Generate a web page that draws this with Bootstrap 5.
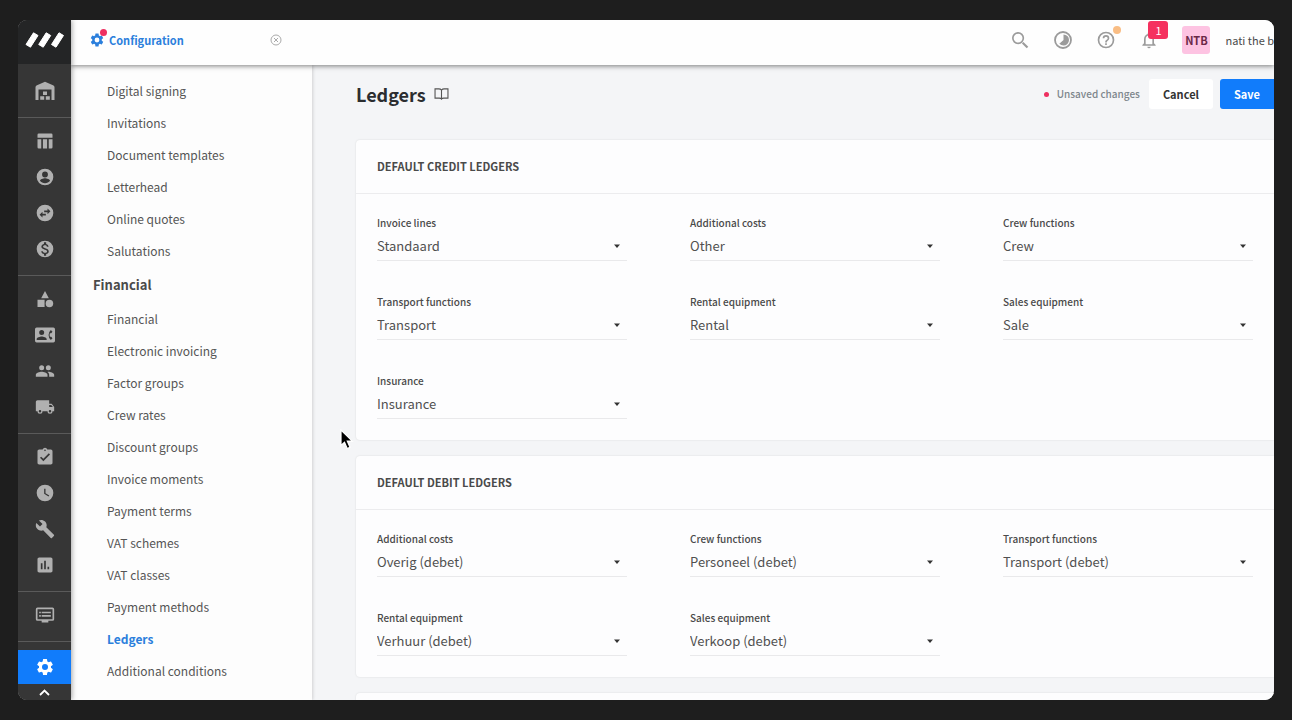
<!DOCTYPE html>
<html lang="en">
<head>
<meta charset="utf-8">
<meta name="viewport" content="width=device-width, initial-scale=1">
<title>Ledgers</title>
<link href="https://cdn.jsdelivr.net/npm/bootstrap@5.3.0/dist/css/bootstrap.min.css" rel="stylesheet">
<style>
  body { background: #1e1e1e; color: #4a4a4a; font-family: "Noto Sans CJK SC", "Noto Sans", sans-serif; font-size: 13px; line-height: 20px; padding: 20px 18px; }
  svg { display: block; fill: currentColor; }
  .app { height: calc(100vh - 40px); border-radius: 9px; background: #f4f5f7; }

  /* Icon rail */
  .rail { width: 53px; background: #363636; z-index: 4; box-shadow: 1px 0 5px rgba(0,0,0,.35); }
  .brand { height: 45px; padding-bottom: 5px; background: #242526; color: #fff; }
  .rail-group { padding: 5px 0 8px; border-bottom: 1px solid #5a5a5a; }
  .rail-group:first-of-type { padding-top: 9px; }
  .rail-link { height: 36px; color: #b0b0b0; display: flex; align-items: center; justify-content: center; }
  .rail-link.active { height: 35px; margin-top: 8px; background: #117cfb; color: #fff; }
  .rail-more { height: 16px; border: 0; background: #363636; color: #fff; }

  /* Top bar */
  .topbar { height: 45px; background: #fefefe; z-index: 3; box-shadow: 0 1px 5px rgba(0,0,0,.5); padding: 0 0 5px 18px; }
  .tab { width: 193px; color: #2b7fdc; font-weight: 700; font-size: 11px; }
  .tab a { color: inherit; }
  .dot { width: 7px; height: 7px; border-radius: 50%; background: #ee2f60; }
  .tab .dot { top: -1px; left: 11px; }
  .plain-btn { border: 0; background: none; padding: 0; color: #9b9b9b; }
  .tools { gap: 23px; }
  .count { top: -9px; left: 9px; width: 20px; height: 18px; border-radius: 3px; background: #f5315f; color: #fff; font-size: 11px; line-height: 18px; }
  .tip { top: -4px; left: 17px; width: 8px; height: 8px; border-radius: 50%; background: #f9bd84; }
  .avatar { width: 28px; height: 28px; border-radius: 3px; background: #fdc3e2; color: #6b2948; font-weight: 700; font-size: 11px; line-height: 28px; }
  .user { margin-left: 15px; min-width: 48px; font-size: 11px; }

  /* Settings menu */
  .menu { width: 241px; background: #fdfdfd; box-shadow: 1px 0 3px rgba(0,0,0,.15); padding-top: 10px; z-index: 2; font-size: 12px; }
  .menu a { display: block; height: 32px; line-height: 32px; padding-left: 36px; color: #555; }
  .menu a.active { color: #2b7fdc; font-weight: 700; }
  .menu h2 { height: 36px; line-height: 36px; padding-left: 22px; margin: 0; font-size: 13px; font-weight: 700; color: #4a4a4a; }

  /* Page */
  .page { padding: 13px 0 0 44px; }
  .page-head { height: 32px; margin-bottom: 30px; }
  h1 { font-size: 18px; line-height: 30px; font-weight: 700; color: #2b2d30; }
  .unsaved { font-size: 10px; color: #7d868c; font-weight: 500; }
  .unsaved .dot { width: 5px; height: 5px; }
  .act { height: 30px; border: 0; border-radius: 3px; font-size: 11px; line-height: 30px; padding: 0 14px; font-weight: 700; }
  .act-cancel { background: #fff; color: #333; margin-left: 9px; }
  .act-save { background: #117cfb; color: #fff; margin-left: 7px; border-radius: 3px 0 0 3px; }
  .panel { background: #fdfdfe; border-radius: 4px 0 0 4px; margin-bottom: 16px; box-shadow: 0 0 2px rgba(0,0,0,.12); }
  .panel h2 { margin: 0; height: 54px; line-height: 53px; padding-left: 21px; font-size: 11px; font-weight: 700; border-bottom: 1px solid #ececee; }
  .fields { display: grid; grid-template-columns: repeat(3, 1fr); gap: 33px 63px; padding: 21px; }
  .fields label { display: block; font-size: 10px; line-height: 15px; margin-bottom: 1px; font-weight: 500; }
  .fields select { display: block; width: 100%; height: 30px; padding: 0; border: 0; border-bottom: 1px solid #e9e9eb; border-radius: 0; color: #505050; font-size: 13px; line-height: 28px; appearance: none;
    background: url("data:image/svg+xml,%3Csvg xmlns='http://www.w3.org/2000/svg' viewBox='0 0 6 4'%3E%3Cpath d='M0 .5h6L3 4z' fill='%23333'/%3E%3C/svg%3E") no-repeat right 7px center / 6px 4px; }
  .pointer { left: 322px; top: 409px; z-index: 5; }
</style>
</head>
<body>
<svg width="0" height="0" class="position-absolute" aria-hidden="true">
  <symbol id="gear" viewBox="0 0 24 24"><path d="M19.14 12.94c.04-.3.06-.61.06-.94 0-.32-.02-.64-.07-.94l2.03-1.58a.49.49 0 0 0 .12-.61l-1.92-3.32a.49.49 0 0 0-.59-.22l-2.39.96c-.5-.38-1.03-.7-1.62-.94l-.36-2.54a.48.48 0 0 0-.48-.41h-3.84a.47.47 0 0 0-.47.41l-.36 2.54c-.59.24-1.13.57-1.62.94l-2.39-.96a.47.47 0 0 0-.59.22L2.74 8.87a.47.47 0 0 0 .12.61l2.03 1.58c-.05.3-.09.63-.09.94s.02.64.07.94l-2.03 1.58a.49.49 0 0 0-.12.61l1.92 3.32c.12.22.37.29.59.22l2.39-.96c.5.38 1.03.7 1.62.94l.36 2.54c.05.24.24.41.48.41h3.84c.24 0 .44-.17.47-.41l.36-2.54c.59-.24 1.13-.56 1.62-.94l2.39.96c.22.08.47 0 .59-.22l1.92-3.32a.47.47 0 0 0-.12-.61zM12 15.6a3.6 3.6 0 1 1 0-7.2 3.6 3.6 0 0 1 0 7.2z"/></symbol>
</svg>

<div class="app d-flex overflow-hidden position-relative">
  <nav class="rail d-flex flex-column flex-shrink-0" aria-label="Modules">
    <a href="#" class="brand d-flex align-items-center justify-content-center" aria-label="Home">
      <svg width="40" height="18" viewBox="0 0 40 18"><path d="M8.5 1.8 13 4.5 5.5 16.2 1 13.5zM21.200 1.800l4.500 2.700-7.500 11.700-4.500-2.700zM34 1.800l4.500 2.700L31 16.200l-4.500-2.700z" stroke="currentColor" stroke-width="1" stroke-linejoin="round"/></svg>
    </a>
    <div class="rail-group">
      <a href="#" class="rail-link" aria-label="Warehouse"><svg width="20" height="20" viewBox="0 0 20 20"><path d="M.5 19V6.200Q.5 4.800 2 4.200L10 .8l8 3.400q1.500.6 1.500 2V19h-3V8.500h-13V19z"/><path d="M8 10.500h4v3.500H8zM5.200 15.200h4v3.500h-4zM10.800 15.200h4v3.500h-4z"/></svg></a>
    </div>
    <div class="rail-group">
      <a href="#" class="rail-link" aria-label="Dashboard"><svg width="20" height="20" viewBox="0 0 24 24"><path d="M3 4.500Q3 3 4.500 3h15Q21 3 21 4.500V8H3zM3 10h4.500v11h-3Q3 21 3 19.500zM9.500 10h5v11h-5zM16.500 10H21v9.500q0 1.500-1.500 1.500h-3z"/></svg></a>
      <a href="#" class="rail-link" aria-label="Account"><svg width="20" height="20" viewBox="0 0 24 24"><path d="M12 2a10 10 0 1 0 0 20 10 10 0 0 0 0-20zm0 3.500a3.500 3.500 0 1 1 0 7 3.500 3.500 0 0 1 0-7zm0 14c-2.500 0-4.700-1.100-6-3 0-2 4-3.100 6-3.100s6 1.100 6 3.100c-1.300 1.900-3.500 3-6 3z"/></svg></a>
      <a href="#" class="rail-link" aria-label="Transfers"><svg width="20" height="20" viewBox="0 0 24 24"><path fill-rule="evenodd" d="M12 2a10 10 0 1 0 0 20 10 10 0 0 0 0-20zM5.500 14 9 10.500V13h4v2H9v2.500zM15 13.500V11h-4V9h4V6.500l3.500 3.500z"/></svg></a>
      <a href="#" class="rail-link" aria-label="Finance"><svg width="20" height="20" viewBox="0 0 24 24"><path d="M12 2a10 10 0 1 0 0 20 10 10 0 0 0 0-20zm1.410 16.090V20h-2.670v-1.930c-1.710-.36-3.160-1.460-3.270-3.400h1.960c.1 1.050.82 1.870 2.650 1.870 1.960 0 2.400-.98 2.400-1.590 0-.83-.44-1.610-2.670-2.140-2.480-.6-4.180-1.620-4.180-3.670 0-1.720 1.390-2.840 3.110-3.210V4h2.670v1.950c1.860.45 2.790 1.860 2.850 3.390H14.300c-.05-1.110-.64-1.870-2.220-1.870-1.500 0-2.400.68-2.400 1.640 0 .84.65 1.390 2.670 1.910s4.180 1.390 4.180 3.910c-.01 1.830-1.380 2.830-3.120 3.160z"/></svg></a>
    </div>
    <div class="rail-group">
      <a href="#" class="rail-link" aria-label="Equipment"><svg width="20" height="20" viewBox="0 0 24 24"><path d="m12 2.500 4.600 8.500H7.400zM3 13h8.500v8.500H3z"/><circle cx="17.300" cy="17.300" r="4.500"/></svg></a>
      <a href="#" class="rail-link" aria-label="Contacts"><svg width="20" height="20" viewBox="0 0 24 24"><path fill-rule="evenodd" d="M2 3h20q2 0 2 2v14q0 2-2 2H2q-2 0-2-2V5q0-2 2-2zm6 3a3 3 0 1 0 0 6 3 3 0 0 0 0-6zm6 12v-1c0-2-4-3.100-6-3.100S2 15 2 17v1zm3.850-4a5.600 5.600 0 0 1 0-4h1.640L21 8l-2-2a8 8 0 0 0 0 12l2-2-1.510-2z"/></svg></a>
      <a href="#" class="rail-link" aria-label="Crew"><svg width="20" height="20" viewBox="0 0 24 24"><path d="M16 11a3 3 0 1 0 0-6 3 3 0 0 0 0 6zm-8 0a3 3 0 1 0 0-6 3 3 0 0 0 0 6zm0 2c-2.330 0-7 1.170-7 3.500V19h14v-2.500C15 14.170 10.330 13 8 13zm8 0c-.29 0-.62.020-.97.050 1.160.84 1.970 1.970 1.970 3.450V19h6v-2.500c0-2.330-4.670-3.500-7-3.500z"/></svg></a>
      <a href="#" class="rail-link" aria-label="Vehicles"><svg width="20" height="20" viewBox="0 0 24 24"><path d="M20 8h-3V4H3c-1.100 0-2 .9-2 2v11h2a3 3 0 0 0 6 0h6a3 3 0 0 0 6 0h2v-5zM6 18.500a1.500 1.500 0 1 1 0-3 1.500 1.500 0 0 1 0 3zm13.500-9 1.960 2.500H17V9.500zm-1.500 9a1.500 1.500 0 1 1 0-3 1.500 1.500 0 0 1 0 3z"/></svg></a>
    </div>
    <div class="rail-group">
      <a href="#" class="rail-link" aria-label="Tasks"><svg width="20" height="20" viewBox="0 0 24 24"><path d="M19 3h-4.180a3 3 0 0 0-5.640 0H5c-1.100 0-2 .9-2 2v14c0 1.100.9 2 2 2h14c1.100 0 2-.9 2-2V5c0-1.100-.9-2-2-2zm-7 0a1 1 0 1 1 0 2 1 1 0 0 1 0-2zm-2 14-4-4 1.410-1.410L10 14.170l6.590-6.590L18 9z"/></svg></a>
      <a href="#" class="rail-link" aria-label="Time"><svg width="20" height="20" viewBox="0 0 24 24"><path fill-rule="evenodd" d="M12 2a10 10 0 1 0 0 20 10 10 0 0 0 0-20zm-1 5h1.600v5.200l4.500 2.700-.9 1.300L11 13z"/></svg></a>
      <a href="#" class="rail-link" aria-label="Maintenance"><svg width="20" height="20" viewBox="0 0 24 24"><path d="m22.700 19-9.100-9.100c.9-2.300.4-5-1.500-6.900-2-2-5-2.400-7.400-1.300L9 6 6 9 1.600 4.700C.4 7.100.9 10.100 2.900 12.100c1.900 1.900 4.600 2.400 6.900 1.500l9.100 9.100c.4.4 1 .4 1.400 0l2.300-2.300c.5-.4.5-1.100.1-1.400z"/></svg></a>
      <a href="#" class="rail-link" aria-label="Reports"><svg width="20" height="20" viewBox="0 0 24 24"><path d="M19 3H5c-1.100 0-2 .9-2 2v14c0 1.100.9 2 2 2h14c1.100 0 2-.9 2-2V5c0-1.100-.9-2-2-2zM9 17H7v-7h2zm4 0h-2V7h2zm4 0h-2v-3h2z"/></svg></a>
    </div>
    <div class="rail-group">
      <a href="#" class="rail-link" aria-label="Displays"><svg width="20" height="20" viewBox="0 0 24 24"><path fill-rule="evenodd" d="M3 3h18q2 0 2 2v12q0 2-2 2h-5v2H8v-2H3q-2 0-2-2V5q0-2 2-2zm0 2v12h18V5zm5 3h11v2H8zm0 4h11v2H8zM5 8h2v2H5zm0 4h2v2H5z"/></svg></a>
    </div>
    <a href="#" class="rail-link active" aria-label="Configuration" aria-current="page"><svg width="20" height="20"><use href="#gear"/></svg></a>
    <button type="button" class="rail-more d-flex justify-content-center align-items-center" aria-label="Collapse"><svg width="11" height="7" viewBox="0 0 11 7"><path d="m1 6 4.500-4.500L10 6" fill="none" stroke="currentColor" stroke-width="1.800"/></svg></button>
  </nav>

  <div class="d-flex flex-column flex-grow-1">
    <header class="topbar d-flex align-items-center flex-shrink-0 position-relative">
      <div class="tab d-flex align-items-center">
        <a href="#" class="d-flex align-items-center position-relative text-decoration-none"><svg width="16" height="16" class="me-1"><use href="#gear"/></svg><span class="dot position-absolute"></span>Configuration</a>
        <button type="button" class="plain-btn ms-auto" aria-label="Close tab"><svg width="12" height="12" viewBox="0 0 12 12" fill="none" stroke="#aaa" style="fill:none"><circle cx="6" cy="6" r="5"/><path d="m4 4 4 4m0-4L4 8"/></svg></button>
      </div>
      <div class="tools d-flex align-items-center ms-auto">
        <button type="button" class="plain-btn" aria-label="Search"><svg width="20" height="20" viewBox="0 0 24 24"><path d="M15.200 15.200 21 21" fill="none" stroke="currentColor" stroke-width="2.600"/><circle cx="9.700" cy="9.700" r="6.300" fill="none" stroke="currentColor" stroke-width="2"/></svg></button>
        <button type="button" class="plain-btn" aria-label="Activity"><svg width="20" height="20" viewBox="0 0 20 20"><circle cx="10" cy="10" r="8" fill="none" stroke="currentColor" stroke-width="1.800"/><path d="M10.500 4.500a5.500 5.500 0 0 1 0 11q-2.500 0-4.200-1.700l4.200-3.800z"/></svg></button>
        <button type="button" class="plain-btn position-relative" aria-label="Help"><svg width="20" height="20" viewBox="0 0 24 24"><path d="M11 18h2v-2h-2zm1-16a10 10 0 1 0 0 20 10 10 0 0 0 0-20zm0 18a8 8 0 1 1 0-16 8 8 0 0 1 0 16zm0-14a4 4 0 0 0-4 4h2a2 2 0 1 1 4 0c0 2-3 1.750-3 5h2c0-2.250 3-2.500 3-5a4 4 0 0 0-4-4z"/></svg><span class="tip position-absolute"></span></button>
        <button type="button" class="plain-btn position-relative" aria-label="Notifications"><svg width="20" height="20" viewBox="0 0 24 24"><path d="M12 22a2 2 0 0 0 2-2h-4a2 2 0 0 0 2 2zm6-6v-5c0-3.070-1.630-5.640-4.500-6.320V4a1.500 1.500 0 0 0-3 0v.68C7.640 5.360 6 7.920 6 11v5l-2 2v1h16v-1zm-2 1H8v-6c0-2.480 1.510-4.500 4-4.500s4 2.020 4 4.500z"/></svg><span class="count position-absolute text-center">1</span></button>
        <span class="avatar text-center">NTB</span>
      </div>
      <span class="user text-nowrap">nati the b</span>
    </header>

    <div class="d-flex flex-grow-1 overflow-hidden">
      <nav class="menu flex-shrink-0 overflow-hidden position-relative" aria-label="Settings">
        <a href="#" class="text-decoration-none">Digital signing</a>
        <a href="#" class="text-decoration-none">Invitations</a>
        <a href="#" class="text-decoration-none">Document templates</a>
        <a href="#" class="text-decoration-none">Letterhead</a>
        <a href="#" class="text-decoration-none">Online quotes</a>
        <a href="#" class="text-decoration-none">Salutations</a>
        <h2>Financial</h2>
        <a href="#" class="text-decoration-none">Financial</a>
        <a href="#" class="text-decoration-none">Electronic invoicing</a>
        <a href="#" class="text-decoration-none">Factor groups</a>
        <a href="#" class="text-decoration-none">Crew rates</a>
        <a href="#" class="text-decoration-none">Discount groups</a>
        <a href="#" class="text-decoration-none">Invoice moments</a>
        <a href="#" class="text-decoration-none">Payment terms</a>
        <a href="#" class="text-decoration-none">VAT schemes</a>
        <a href="#" class="text-decoration-none">VAT classes</a>
        <a href="#" class="text-decoration-none">Payment methods</a>
        <a href="#" class="text-decoration-none active" aria-current="page">Ledgers</a>
        <a href="#" class="text-decoration-none">Additional conditions</a>
      </nav>

      <main class="page flex-grow-1 overflow-hidden">
        <div class="page-head d-flex align-items-center">
          <h1 class="m-0">Ledgers</h1>
          <svg class="ms-2" width="15" height="12" viewBox="0 0 16 13" style="fill:none" stroke="#555" stroke-width="1.200"><path d="M8 2.200Q7 1 5 1H1v10h4.500Q7.500 11 8 12q.5-1 2.500-1H15V1h-4Q9 1 8 2.200zM8 2.200V12"/></svg>
          <span class="unsaved d-flex align-items-center gap-2 ms-auto"><span class="dot"></span>Unsaved changes</span>
          <button type="button" class="act act-cancel">Cancel</button>
          <button type="button" class="act act-save">Save</button>
        </div>

        <section class="panel">
          <h2>DEFAULT CREDIT LEDGERS</h2>
          <div class="fields">
            <div><label for="c1">Invoice lines</label><select id="c1"><option>Standaard</option></select></div>
            <div><label for="c2">Additional costs</label><select id="c2"><option>Other</option></select></div>
            <div><label for="c3">Crew functions</label><select id="c3"><option>Crew</option></select></div>
            <div><label for="c4">Transport functions</label><select id="c4"><option>Transport</option></select></div>
            <div><label for="c5">Rental equipment</label><select id="c5"><option>Rental</option></select></div>
            <div><label for="c6">Sales equipment</label><select id="c6"><option>Sale</option></select></div>
            <div><label for="c7">Insurance</label><select id="c7"><option>Insurance</option></select></div>
          </div>
        </section>

        <section class="panel">
          <h2>DEFAULT DEBIT LEDGERS</h2>
          <div class="fields">
            <div><label for="d1">Additional costs</label><select id="d1"><option>Overig (debet)</option></select></div>
            <div><label for="d2">Crew functions</label><select id="d2"><option>Personeel (debet)</option></select></div>
            <div><label for="d3">Transport functions</label><select id="d3"><option>Transport (debet)</option></select></div>
            <div><label for="d4">Rental equipment</label><select id="d4"><option>Verhuur (debet)</option></select></div>
            <div><label for="d5">Sales equipment</label><select id="d5"><option>Verkoop (debet)</option></select></div>
          </div>
        </section>

        <section class="panel p-4"></section>
      </main>
    </div>
  </div>

  <svg class="pointer position-absolute" width="14" height="21" viewBox="0 0 14 21" aria-hidden="true"><path d="M1 1v15.500l3.500-3.300 2.700 6.300 2.800-1.200-2.700-6.200h5z" fill="#000" stroke="#fff" stroke-width="1.200"/></svg>
</div>
<script src="https://cdn.jsdelivr.net/npm/bootstrap@5.3.0/dist/js/bootstrap.bundle.min.js"></script>
</body>
</html>
